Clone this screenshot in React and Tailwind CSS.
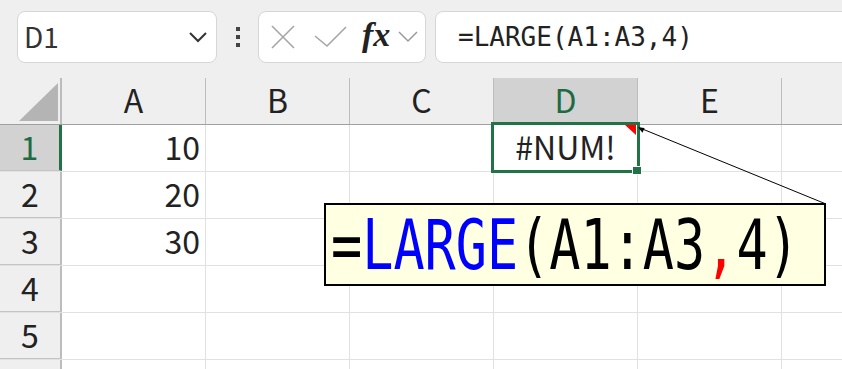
import React from "react";

const cols = [
  { label: "A", w: "w-[144px]" },
  { label: "B", w: "w-[144px]" },
  { label: "C", w: "w-[144px]" },
  { label: "D", w: "w-[144px]", active: true },
  { label: "E", w: "w-[144px]" },
  { label: "", w: "w-[144px]" },
];

const rows = [
  { n: 1, a: "10", d: "#NUM!" },
  { n: 2, a: "20" },
  { n: 3, a: "30" },
  { n: 4 },
  { n: 5 },
  { n: "" },
];

const TopBar = () => (
  <div className="h-[78px] bg-[#efefef] flex items-start pl-[17px] pt-[11px] overflow-hidden">
    {/* name box */}
    <div className="w-[200px] h-[52px] shrink-0 bg-white border border-[#d6d6d6] rounded-[8px] flex items-center justify-between pl-[6px] pr-[8px]">
      <span className="text-[28px] leading-none text-[#333] pb-[2px]">D1</span>
      <svg width="20" height="12" viewBox="0 0 20 12">
        <path d="M2 2 L10 10 L18 2" fill="none" stroke="#333" strokeWidth="2" />
      </svg>
    </div>

    {/* dots */}
    <div className="ml-[19px] w-[4px] h-[52px] shrink-0 flex flex-col justify-center gap-[4px]">
      <div className="w-[4px] h-[4px] bg-[#444]" />
      <div className="w-[4px] h-[4px] bg-[#444]" />
      <div className="w-[4px] h-[4px] bg-[#444]" />
    </div>

    {/* cancel / enter / fx */}
    <div className="ml-[18px] w-[168px] h-[52px] shrink-0 bg-white border border-[#d6d6d6] rounded-[8px] flex items-center pl-[12px]">
      <svg width="24" height="24" viewBox="0 0 24 24">
        <path d="M1 1 L23 23 M23 1 L1 23" stroke="#a6a6a6" strokeWidth="1.6" />
      </svg>
      <svg className="ml-[19px]" width="33" height="22" viewBox="0 0 33 22">
        <path d="M1 10 L13 20 L32 1" fill="none" stroke="#a6a6a6" strokeWidth="1.6" />
      </svg>
      <span className="ml-[15px] font-['Liberation_Serif',serif] italic font-semibold text-[34px] leading-none text-[#222] pb-[5px]">
        fx
      </span>
      <svg className="ml-[8px]" width="20" height="12" viewBox="0 0 20 12">
        <path d="M1 1 L10 10 L19 1" fill="none" stroke="#9a9a9a" strokeWidth="1.5" />
      </svg>
    </div>

    {/* formula box */}
    <div className="ml-[9px] w-[430px] h-[52px] shrink-0 bg-white border border-[#d6d6d6] rounded-[8px] flex items-center pl-[22px]">
      <span className="font-['DejaVu_Sans_Mono',monospace] text-[26px] leading-none text-[#222]">
        =LARGE(A1:A3,4)
      </span>
    </div>
  </div>
);

const HeaderRow = () => (
  <div className="flex h-[47px] bg-[#efefef] border-b border-[#a0a0a0]">
    <div className="w-[62px] shrink-0 border-r-2 border-[#bcbcbc] relative">
      <svg className="absolute left-0 top-0" width="60" height="46" viewBox="0 0 60 46">
        <polygon points="19,43 58,5 58,43" fill="#b4b4b4" />
      </svg>
    </div>
    {cols.map((c, i) => (
      <div
        key={i}
        className={
          c.w +
          " shrink-0 border-r border-[#bcbcbc] flex items-center justify-center pb-[4px] text-[32px] leading-none " +
          (c.active ? "bg-[#d2d2d2] text-[#1e6b41]" : "text-[#222]")
        }
      >
        {c.label}
      </div>
    ))}
  </div>
);

const Row = ({ r }) => (
  <div className="flex h-[47px] border-b border-[#e1e1e1]">
    <div
      className={
        "w-[62px] shrink-0 flex items-center justify-center pb-[4px] text-[32px] leading-none border-b " +
        (r.n === 1
          ? "bg-[#d2d2d2] text-[#1e6b41] border-r-[3px] border-r-[#217346] border-b-[#c4c4c4]"
          : "bg-[#efefef] text-[#222] border-r-2 border-r-[#bcbcbc] border-b-[#c4c4c4]")
      }
    >
      {r.n}
    </div>
    {cols.map((c, i) => (
      <div
        key={i}
        className={
          c.w +
          " shrink-0 border-r border-[#e1e1e1] flex items-center text-[32px] leading-none text-[#222] pb-[4px] " +
          (c.label === "A" ? "justify-end pr-[5px]" : "justify-center")
        }
      >
        {c.label === "A" ? r.a : c.label === "D" ? r.d : null}
      </div>
    ))}
  </div>
);

export default function App() {
  return (
    <div className="relative w-[842px] h-[369px] overflow-hidden bg-white font-['Noto_Sans_CJK_JP','Noto_Sans',sans-serif]">
      <TopBar />
      <div>
        <HeaderRow />
        {rows.map((r, i) => (
          <Row key={i} r={r} />
        ))}
      </div>

      {/* active cell D1 */}
      <div className="absolute left-[491px] top-[122px] w-[149px] h-[51px] border-[3px] border-[#217346]" />
      <div className="absolute left-[632px] top-[166px] w-[10px] h-[9px] bg-[#217346] border border-white" />
      <svg className="absolute left-[625px] top-[125px]" width="11" height="10" viewBox="0 0 11 10">
        <polygon points="0,0 11,0 11,10" fill="#ff0000" />
      </svg>

      {/* leader line */}
      <svg className="absolute left-0 top-0 pointer-events-none" width="842" height="369" viewBox="0 0 842 369">
        <line x1="826" y1="204" x2="640" y2="128" stroke="#000" strokeWidth="1" />
        <polygon points="638,127.3 642.5,132.8 644.6,127.9" fill="#000" />
      </svg>

      {/* callout */}
      <div className="absolute left-[324px] top-[203px] w-[502px] h-[83px] border-2 border-black bg-[#ffffe1] flex items-center pl-[5px] overflow-hidden">
        <span className="block origin-left scale-x-[0.74] whitespace-nowrap font-['DejaVu_Sans_Mono',monospace] text-[70px] leading-none text-black">
          =<span className="text-[#0000ff]">LARGE</span>(A1:A3<span className="text-[#ff0000]">,</span>4)
        </span>
      </div>
    </div>
  );
}
